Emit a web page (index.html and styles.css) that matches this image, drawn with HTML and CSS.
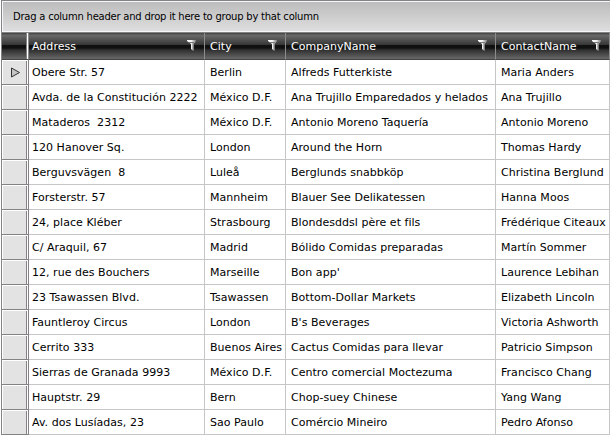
FILE: index.html
```
<!DOCTYPE html>
<html lang="en">
<head>
<meta charset="utf-8">
<title>Customers</title>
<link rel="stylesheet" href="styles.css">
</head>
<body>
<svg class="defs" width="0" height="0">
<defs>
<linearGradient id="fg"><stop offset="0" stop-color="#fff"/><stop offset=".5" stop-color="#eee"/><stop offset="1" stop-color="#777"/></linearGradient>
<symbol id="funnel" viewBox="0 0 12 12"><path d="M1 0H10V1.5L7.5 4V11L5 9V4L1 1Z" fill="url(#fg)"/><path d="M7 2V10" fill="none" stroke="#888"/><path d="M3 2.5H8" stroke="#777" fill="none"/></symbol>
</defs>
</svg>
<div class="grid">
<div class="group-panel">Drag a column header and drop it here to group by that column</div>
<div class="row head">
<div class="indicator"></div>
<div class="th">Address<svg class="filter"><use href="#funnel"/></svg></div>
<div class="th">City<svg class="filter"><use href="#funnel"/></svg></div>
<div class="th">CompanyName<svg class="filter"><use href="#funnel"/></svg></div>
<div class="th">ContactName<svg class="filter"><use href="#funnel"/></svg></div>
</div>
<div class="row"><div class="indicator"><svg class="arrow" viewBox="0 0 11 11"><path d="M1.5 1L9.5 5.5L1.5 10Z" fill="#c4c4c4" stroke="#333"/></svg></div><div>Obere Str. 57</div><div>Berlin</div><div>Alfreds Futterkiste</div><div>Maria Anders</div></div>
<div class="row"><div class="indicator"></div><div>Avda. de la Constitución 2222</div><div>México D.F.</div><div>Ana Trujillo Emparedados y helados</div><div>Ana Trujillo</div></div>
<div class="row"><div class="indicator"></div><div>Mataderos&nbsp; 2312</div><div>México D.F.</div><div>Antonio Moreno Taquería</div><div>Antonio Moreno</div></div>
<div class="row"><div class="indicator"></div><div>120 Hanover Sq.</div><div>London</div><div>Around the Horn</div><div>Thomas Hardy</div></div>
<div class="row"><div class="indicator"></div><div>Berguvsvägen&nbsp; 8</div><div>Luleå</div><div>Berglunds snabbköp</div><div>Christina Berglund</div></div>
<div class="row"><div class="indicator"></div><div>Forsterstr. 57</div><div>Mannheim</div><div>Blauer See Delikatessen</div><div>Hanna Moos</div></div>
<div class="row"><div class="indicator"></div><div>24, place Kléber</div><div>Strasbourg</div><div>Blondesddsl père et fils</div><div>Frédérique Citeaux</div></div>
<div class="row"><div class="indicator"></div><div>C/ Araquil, 67</div><div>Madrid</div><div>Bólido Comidas preparadas</div><div>Martín Sommer</div></div>
<div class="row"><div class="indicator"></div><div>12, rue des Bouchers</div><div>Marseille</div><div>Bon app'</div><div>Laurence Lebihan</div></div>
<div class="row"><div class="indicator"></div><div>23 Tsawassen Blvd.</div><div>Tsawassen</div><div>Bottom-Dollar Markets</div><div>Elizabeth Lincoln</div></div>
<div class="row"><div class="indicator"></div><div>Fauntleroy Circus</div><div>London</div><div>B's Beverages</div><div>Victoria Ashworth</div></div>
<div class="row"><div class="indicator"></div><div>Cerrito 333</div><div>Buenos Aires</div><div>Cactus Comidas para llevar</div><div>Patricio Simpson</div></div>
<div class="row"><div class="indicator"></div><div>Sierras de Granada 9993</div><div>México D.F.</div><div>Centro comercial Moctezuma</div><div>Francisco Chang</div></div>
<div class="row"><div class="indicator"></div><div>Hauptstr. 29</div><div>Bern</div><div>Chop-suey Chinese</div><div>Yang Wang</div></div>
<div class="row"><div class="indicator"></div><div>Av. dos Lusíadas, 23</div><div>Sao Paulo</div><div>Comércio Mineiro</div><div>Pedro Afonso</div></div>
</div>
</body>
</html>
```
FILE: styles.css
```
* { box-sizing: border-box; }
body { margin: 0; background: #fff; overflow: hidden; font: 11px/14px Verdana, "DejaVu Sans", sans-serif; font-variant-ligatures: none; letter-spacing: .03px; color: #000; }
.defs { display: block; }
.grid { width: 609px; margin-left: 1px; border-top: 1px solid #848284; border-left: 1px solid #848284; }
.group-panel { height: 31px; padding: 8px 10px 0; border: 1px solid #f5f5fa; border-right: 0; background: linear-gradient(#bcbcbc, #dedede); font-size: 10px; letter-spacing: -.23px; white-space: nowrap; }
.row { display: grid; grid-template-columns: 27px 176px 81px 210px 114px; height: 25px; }
.row > div { display: flex; align-items: center; padding: 2px 0 0 3px; white-space: nowrap; border-right: 1px solid #c6c6c6; border-bottom: 1px solid #c6c6c6; }
.row > div:nth-child(n+3) { padding-left: 5px; }
.row > .indicator { padding: 1px 0 0 8px; border: 0; border-bottom: 1px solid #848284; border-right: 1px solid #848284; background: linear-gradient(#848284, #848284) 24px 0 / 1px 100% no-repeat, linear-gradient(#fff, #fff) 25px 0 / 1px 100% no-repeat, #e3e3e3; box-shadow: inset 1px 1px #fff; }
.row.head { height: 28px; border-top: 1px solid #848284; color: #fff; }
.row.head > div { border-right-color: #8c8c8c; border-bottom: 1px solid #444; background: linear-gradient(#4a4a4a 0 1px, #6a6a6a 2px, #353535 12px, #101010 12px 15px, #303030 17px, #686868 26px); }
.row.head > .indicator { background: linear-gradient(#848284, #848284) 24px 0 / 1px 100% no-repeat, linear-gradient(#fff, #fff) 25px 0 / 1px 100% no-repeat, linear-gradient(#4a4a4a 0 1px, #6a6a6a 2px, #353535 12px, #101010 12px 15px, #303030 17px, #686868 26px); box-shadow: none; }
.row > .th { justify-content: space-between; padding-right: 6px; }
.filter { width: 12px; height: 12px; margin-top: -2px; }
.arrow { width: 11px; height: 11px; }
```
